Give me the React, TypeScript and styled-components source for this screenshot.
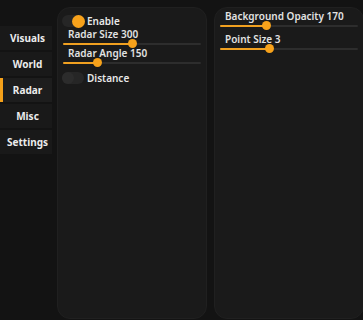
import React from "react";
import styled, { createGlobalStyle } from "styled-components";

const Global = createGlobalStyle`
  html, body { margin: 0; padding: 0; background: #131313; }
  body { font-family: "Noto Sans", "DejaVu Sans", sans-serif; color: #e4e4e4; }
  #root { width: 363px; height: 320px; overflow: hidden; }
`;

const Page = styled.div`
  display: flex;
  width: 363px;
  height: 320px;
  background: #131313;
`;

const Sidebar = styled.nav`
  width: 57px;
  flex: none;
  display: flex;
  flex-direction: column;
  gap: 2px;
  padding-top: 26px;
  box-sizing: border-box;
`;

const Tab = styled.div<{ $active?: boolean }>`
  width: 52px;
  height: 24px;
  box-sizing: border-box;
  display: flex;
  align-items: center;
  justify-content: center;
  background: ${(p) => (p.$active ? "#1d1d1d" : "#191919")};
  border-left: 3px solid ${(p) => (p.$active ? "#f5a11a" : "transparent")};
  font-weight: 700;
  font-size: 10px;
  color: #ececec;
`;

const Panels = styled.div`
  flex: 1;
  display: flex;
  gap: 7px;
  padding-top: 7px;
  padding-bottom: 1px;
  box-sizing: border-box;
`;

const Panel = styled.section<{ $width: number; $padTop: number }>`
  width: ${(p) => p.$width}px;
  flex: none;
  background: #1a1a1a;
  border: 1px solid #202020;
  border-radius: 13px;
  box-sizing: border-box;
  padding: ${(p) => p.$padTop}px 5px 0 4px;
  display: flex;
  flex-direction: column;
`;

const ToggleRow = styled.div<{ $mt: number }>`
  display: flex;
  align-items: center;
  height: 12px;
  margin-top: ${(p) => p.$mt}px;
  gap: 3px;
`;

const Track = styled.div`
  position: relative;
  width: 22px;
  height: 12px;
  border-radius: 6px;
  background: #262626;
  flex: none;
`;

const Knob = styled.div<{ $on?: boolean }>`
  position: absolute;
  top: ${(p) => (p.$on ? -0.5 : 0)}px;
  left: ${(p) => (p.$on ? 10 : 0)}px;
  width: ${(p) => (p.$on ? 13 : 12)}px;
  height: ${(p) => (p.$on ? 13 : 12)}px;
  border-radius: 50%;
  background: ${(p) => (p.$on ? "#f7a21b" : "#2c2c2c")};
`;

const ToggleLabel = styled.span`
  font-size: 10px;
  font-weight: 600;
  line-height: 12px;
  color: #e8e8e8;
`;

const SliderBlock = styled.div<{ $mt: number }>`
  display: flex;
  flex-direction: column;
  margin-top: ${(p) => p.$mt}px;
`;

const Label = styled.div`
  height: 10px;
  line-height: 10px;
  font-size: 10px;
  font-weight: 600;
  padding-left: 6px;
  color: #e2e2e2;
  white-space: nowrap;
`;

const SliderTrack = styled.div`
  position: relative;
  height: 9px;
  margin-left: 1px;
  display: flex;
  align-items: center;
`;

const Rail = styled.div`
  position: relative;
  width: 100%;
  height: 2px;
  background: #2d2d2d;
  border-radius: 1px;
`;

const Fill = styled.div`
  position: absolute;
  left: 0;
  top: 0;
  height: 2px;
  background: #f0a020;
  border-radius: 1px;
`;

const Thumb = styled.div`
  position: absolute;
  top: 50%;
  width: 9px;
  height: 9px;
  margin-left: -4.5px;
  margin-top: -4.5px;
  border-radius: 50%;
  background: #f7a21b;
`;

function Toggle({ on, label, mt }: { on?: boolean; label: string; mt: number }) {
  return (
    <ToggleRow $mt={mt}>
      <Track>
        <Knob $on={on} />
      </Track>
      <ToggleLabel>{label}</ToggleLabel>
    </ToggleRow>
  );
}

function Slider({ label, frac, mt }: { label: string; frac: number; mt: number }) {
  return (
    <SliderBlock $mt={mt}>
      <Label>{label}</Label>
      <SliderTrack>
        <Rail>
          <Fill style={{ width: `${frac * 100}%` }} />
          <Thumb style={{ left: `${frac * 100}%` }} />
        </Rail>
      </SliderTrack>
    </SliderBlock>
  );
}

const tabs = ["Visuals", "World", "Radar", "Misc", "Settings"];

export default function App() {
  return (
    <>
      <Global />
      <Page>
        <Sidebar>
          {tabs.map((t) => (
            <Tab key={t} $active={t === "Radar"}>
              {t}
            </Tab>
          ))}
        </Sidebar>
        <Panels>
          <Panel $width={150} $padTop={0}>
            <Toggle on label="Enable" mt={7} />
            <Slider label="Radar Size 300" frac={0.5} mt={2} />
            <Slider label="Radar Angle 150" frac={0.25} mt={0} />
            <Toggle label="Distance" mt={5} />
          </Panel>
          <Panel $width={150} $padTop={3}>
            <Slider label="Background Opacity 170" frac={0.34} mt={0} />
            <Slider label="Point Size 3" frac={0.36} mt={4} />
          </Panel>
        </Panels>
      </Page>
    </>
  );
}
